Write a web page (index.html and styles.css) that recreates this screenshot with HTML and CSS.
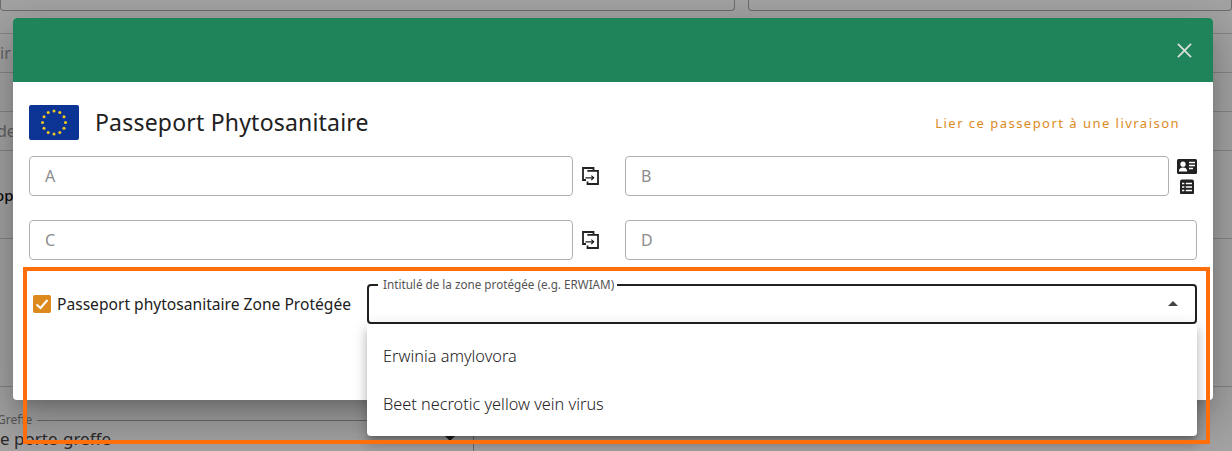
FILE: index.html
```html
<!DOCTYPE html>
<html>
  <head>
    <title>Passeport Phytosanitaire</title>
    <link rel="stylesheet" href="styles.css">
  </head>
  <body>
    <div class="page">
      <div class="top-row">
        <div class="page-field first-field"></div>
        <div class="page-field"></div>
      </div>
      <div class="page-stack">
        <div class="page-input input-one">ir</div>
        <div class="page-input input-two">de</div>
        <div class="page-bold">op</div>
      </div>
      <div class="page-bottom">
        <div class="graft-field">
          <span class="graft-legend">Greffe</span>
          <span class="graft-value">e porte-greffe</span>
          <span class="graft-arrow"></span>
        </div>
      </div>
    </div>

    <div class="backdrop"></div>

    <div class="dialog">
      <div class="dialog-header">
        <svg class="close-icon" viewBox="0 0 16 16">
          <path d="M1 1 L15 15 M15 1 L1 15"></path>
        </svg>
      </div>
      <div class="dialog-body">
        <div class="title-row">
          <div class="title-left">
            <svg class="eu-flag" viewBox="0 0 50 35">
              <rect width="50" height="35" rx="2" fill="#0c3495"></rect>
              <g fill="#f2c81e">
                <circle cx="25" cy="6" r="1.5"></circle>
                <circle cx="30.8" cy="7.5" r="1.5"></circle>
                <circle cx="35" cy="11.7" r="1.5"></circle>
                <circle cx="36.5" cy="17.5" r="1.5"></circle>
                <circle cx="35" cy="23.3" r="1.5"></circle>
                <circle cx="30.8" cy="27.5" r="1.5"></circle>
                <circle cx="25" cy="29" r="1.5"></circle>
                <circle cx="19.2" cy="27.5" r="1.5"></circle>
                <circle cx="15" cy="23.3" r="1.5"></circle>
                <circle cx="13.5" cy="17.5" r="1.5"></circle>
                <circle cx="15" cy="11.7" r="1.5"></circle>
                <circle cx="19.2" cy="7.5" r="1.5"></circle>
              </g>
            </svg>
            <h1 class="dialog-title">Passeport Phytosanitaire</h1>
          </div>
          <a class="link-delivery" href="#">Lier ce passeport à une livraison</a>
        </div>

        <div class="fields-grid">
          <div class="field-wrap">
            <div class="text-field">A</div>
            <svg class="copy-icon" viewBox="0 0 18 18">
              <path d="M11.5 4 V1 H1 V13 H4"></path>
              <path d="M5.3 3.8 H16 V17 H5.5 V14.5"></path>
              <path class="thin" d="M3.5 10.8 H11.5 M9.3 8.6 L11.7 10.8 L9.3 13"></path>
            </svg>
          </div>
          <div class="field-wrap">
            <div class="text-field">B</div>
            <div class="side-icons">
              <svg class="card-icon" viewBox="0 0 20 15">
                <rect width="20" height="15" rx="1.5" fill="#212121"></rect>
                <circle cx="6" cy="5.2" r="2.6" fill="#fff"></circle>
                <path d="M1.8 12.5 C2 9.5 4 8.6 6 8.6 C8 8.6 10 9.5 10.2 12.5 Z" fill="#fff"></path>
                <path d="M12 3.5 H18 M12 6.5 H18 M12 9.5 H16" stroke="#fff" stroke-width="1.3"></path>
              </svg>
              <svg class="list-icon" viewBox="0 0 14 14">
                <rect width="14" height="15" rx="2" fill="#212121"></rect>
                <path d="M2 4 H4.3 M5.8 4 H12 M2 7.5 H4.3 M5.8 7.5 H12 M2 11 H4.3 M5.8 11 H12" stroke="#fff" stroke-width="1.3"></path>
              </svg>
            </div>
          </div>
          <div class="field-wrap">
            <div class="text-field">C</div>
            <svg class="copy-icon" viewBox="0 0 18 18">
              <path d="M11.5 4 V1 H1 V13 H4"></path>
              <path d="M5.3 3.8 H16 V17 H5.5 V14.5"></path>
              <path class="thin" d="M3.5 10.8 H11.5 M9.3 8.6 L11.7 10.8 L9.3 13"></path>
            </svg>
          </div>
          <div class="field-wrap">
            <div class="text-field field-full">D</div>
          </div>
        </div>

        <div class="zone-row">
          <label class="zone-check">
            <span class="checkbox">
              <svg viewBox="0 0 18 18"><path d="M3.5 9.5 L7.5 13 L14.5 5"></path></svg>
            </span>
            Passeport phytosanitaire Zone Protégée
          </label>
          <div class="zone-select">
            <span class="zone-label">Intitulé de la zone protégée (e.g. ERWIAM)</span>
            <span class="select-arrow"></span>
          </div>
        </div>
      </div>
    </div>

    <ul class="zone-menu">
      <li>Erwinia amylovora</li>
      <li>Beet necrotic yellow vein virus</li>
    </ul>

    <div class="highlight"></div>
  </body>
</html>
```

FILE: styles.css
```css
html, body {
  margin: 0;
  height: 100%;
  overflow: hidden;
}

body {
  position: relative;
  background: #fff;
  color: #212121;
  font-family: "Noto Sans", sans-serif;
}

/* Page behind the dialog */
.page {
  height: 451px;
  display: flex;
  flex-direction: column;
  overflow: hidden;
}

.top-row {
  display: flex;
  gap: 13px;
  height: 11px;
}

.page-field {
  flex: 1;
  border: 1px solid #aaa;
  border-top: none;
  border-radius: 0 0 4px 4px;
}

.first-field {
  flex: none;
  width: 733px;
}

.page-stack {
  display: flex;
  flex-direction: column;
}

.page-input {
  height: 38px;
  line-height: 38px;
  border-top: 1px solid #d0d0d0;
  border-bottom: 1px solid #d0d0d0;
  font-size: 16px;
  color: #999;
}

.input-one {
  margin-top: 22px;
}

.input-two {
  margin-top: 38px;
  text-indent: -3px;
}

.page-bold {
  margin-top: 34px;
  line-height: 20px;
  font-size: 15px;
  font-weight: 500;
  text-indent: -5px;
  color: #111;
  padding-bottom: 33px;
  border-bottom: 1px solid #d0d0d0;
}

.page-bottom {
  margin-top: auto;
  height: 65px;
  border-top: 1px solid #d0d0d0;
  box-sizing: border-box;
}

.graft-field {
  position: relative;
  width: 473px;
  height: 31px;
  margin-top: 33px;
  border-top: 1px solid #aaa;
  border-right: 1px solid #aaa;
}

.graft-legend {
  position: absolute;
  left: -3px;
  top: -8px;
  padding-right: 5px;
  background: #fff;
  font-size: 12px;
  line-height: 14px;
  color: #888;
}

.graft-value {
  position: absolute;
  left: 0;
  top: 6px;
  font-size: 17px;
  line-height: 23px;
  color: #444;
  white-space: nowrap;
}

.graft-arrow {
  position: absolute;
  left: 445px;
  top: 15px;
  border-left: 5px solid transparent;
  border-right: 5px solid transparent;
  border-top: 5px solid #333;
}

.backdrop {
  position: absolute;
  left: 0;
  top: 0;
  width: 100%;
  height: 100%;
  background: rgba(0, 0, 0, 0.36);
}

/* Dialog */
.dialog {
  position: absolute;
  left: 13px;
  top: 18px;
  width: 1200px;
  height: 382px;
  background: #fff;
  border-radius: 4px;
  overflow: hidden;
  box-shadow: 0 11px 15px -7px rgba(0, 0, 0, 0.2), 0 24px 38px 3px rgba(0, 0, 0, 0.14), 0 9px 46px 8px rgba(0, 0, 0, 0.12);
}

.dialog-header {
  height: 64px;
  background: #1f845a;
  display: flex;
  align-items: center;
  justify-content: flex-end;
  padding-right: 21px;
}

.close-icon {
  width: 15px;
  height: 15px;
}

.close-icon path {
  fill: none;
  stroke: #d5ded9;
  stroke-width: 2;
}

.dialog-body {
  padding: 0 16px;
}

.title-row {
  display: flex;
  align-items: center;
  justify-content: space-between;
  padding-top: 23px;
}

.title-left {
  display: flex;
  align-items: center;
  gap: 16px;
}

.eu-flag {
  width: 50px;
  height: 35px;
}

.dialog-title {
  margin: 0;
  font-size: 23px;
  font-weight: 400;
  line-height: 35px;
  letter-spacing: 0.2px;
}

.link-delivery {
  margin-right: 17px;
  font-size: 13px;
  letter-spacing: 1.47px;
  color: #dc8a1e;
  text-decoration: none;
}

.fields-grid {
  display: grid;
  grid-template-columns: 572px 572px;
  column-gap: 24px;
  row-gap: 24px;
  margin-top: 16px;
}

.field-wrap {
  display: flex;
  align-items: center;
}

.text-field {
  flex: none;
  width: 542px;
  height: 38px;
  line-height: 38px;
  border: 1px solid #b0b0b0;
  border-radius: 4px;
  text-indent: 15px;
  font-size: 16px;
  color: #8c8c8c;
}

.field-full {
  width: 570px;
}

.copy-icon {
  width: 18px;
  height: 18px;
  margin-left: 9px;
}

.copy-icon path {
  fill: none;
  stroke: #212121;
  stroke-width: 1.8;
}

.copy-icon path.thin {
  stroke-width: 1.2;
}

.side-icons {
  display: flex;
  flex-direction: column;
  align-items: center;
  gap: 5px;
  margin-left: 8px;
}

.card-icon {
  width: 20px;
  height: 15px;
}

.list-icon {
  width: 14px;
  height: 15px;
}

.zone-row {
  display: flex;
  align-items: center;
  margin-top: 24px;
  padding-left: 4px;
}

.zone-check {
  display: flex;
  align-items: center;
  gap: 6px;
  width: 334px;
  font-size: 15.6px;
  white-space: nowrap;
}

.checkbox {
  width: 18px;
  height: 18px;
  background: #dc8a1e;
  border-radius: 2px;
  flex: none;
}

.checkbox svg {
  display: block;
}

.checkbox path {
  fill: none;
  stroke: #fff;
  stroke-width: 2;
}

.zone-select {
  position: relative;
  width: 826px;
  height: 36px;
  border: 2px solid #212121;
  border-radius: 4px;
}

.zone-label {
  position: absolute;
  left: 9px;
  top: -8px;
  padding: 0 3px 0 5px;
  background: #fff;
  font-size: 11.7px;
  line-height: 12px;
  color: #555;
  white-space: nowrap;
}

.select-arrow {
  position: absolute;
  right: 17px;
  top: 15px;
  border-left: 5px solid transparent;
  border-right: 5px solid transparent;
  border-bottom: 5px solid #444;
}

/* Open dropdown */
.zone-menu {
  position: absolute;
  left: 367px;
  top: 324px;
  width: 830px;
  height: 112px;
  margin: 0;
  padding: 8px 0;
  box-sizing: border-box;
  list-style: none;
  background: #fff;
  border-radius: 0 0 4px 4px;
  box-shadow: 0 5px 5px -3px rgba(0, 0, 0, 0.2), 0 8px 10px 1px rgba(0, 0, 0, 0.14), 0 3px 14px 2px rgba(0, 0, 0, 0.12);
}

.zone-menu li {
  height: 48px;
  line-height: 48px;
  padding-left: 16px;
  font-size: 16.3px;
  font-weight: 300;
  color: #222;
}

/* Orange annotation */
.highlight {
  position: absolute;
  left: 23px;
  top: 267px;
  width: 1187px;
  height: 177px;
  box-sizing: border-box;
  border: 4px solid #ff6e0a;
}
```
